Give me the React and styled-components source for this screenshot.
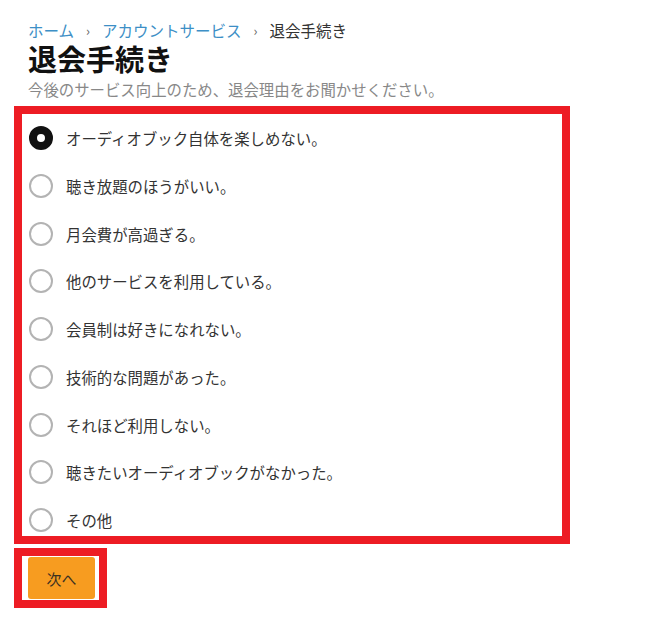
import React, { useState } from "react";
import styled, { createGlobalStyle } from "styled-components";

const Global = createGlobalStyle`
  html, body { margin: 0; padding: 0; background: #fff; }
  body { font-family: "Noto Sans CJK JP", "Noto Sans", sans-serif; color: #333; }
`;

const Page = styled.div`
  padding: 19px 0 0 14px;
  width: 556px;
`;

const Header = styled.div`
  padding-left: 14px;
`;

const Breadcrumb = styled.nav`
  display: flex;
  align-items: center;
  gap: 12px;
  font-size: 15.5px;
  line-height: 22px;
  height: 22px;
`;

const Crumb = styled.span`
  color: ${(p) => (p.$current ? "#333" : "#3d8fc6")};
`;

const Sep = styled.span`
  color: #666;
  font-size: 13px;
  transform: translateY(1px);
`;

const Title = styled.h1`
  margin: 0;
  font-size: 29px;
  line-height: 34px;
  font-weight: 700;
  color: #111;
`;

const Sub = styled.p`
  margin: 2px 0 0;
  font-size: 15.4px;
  line-height: 24px;
  color: #888;
`;

const Frame = styled.div`
  border: 8px solid #ed1c24;
  margin-top: 5px;
  padding: 12px 7px 4px;
  display: flex;
  flex-direction: column;
  gap: 23.75px;
  box-sizing: content-box;
  height: 406px;
`;

const Row = styled.label`
  display: flex;
  align-items: center;
  gap: 13px;
  height: 24px;
  cursor: pointer;
  font-size: 15.4px;
  color: #333;
`;

const Circle = styled.span`
  box-sizing: border-box;
  width: 24px;
  height: 24px;
  border-radius: 50%;
  flex: none;
  border: ${(p) => (p.$on ? "8px solid #111" : "2.5px solid #b3b3b3")};
  background: #fff;
`;

const ButtonFrame = styled.div`
  margin-top: 4px;
  width: 67px;
  border: 8px solid #ed1c24;
  padding: 1px 4px 1px 6px;
  box-sizing: content-box;
  height: 42px;
`;

const NextButton = styled.button`
  width: 67px;
  height: 42px;
  border: none;
  border-radius: 3px;
  background: #f79c20;
  color: #3a3020;
  font-family: "Noto Sans CJK JP", sans-serif;
  font-size: 15px;
  padding: 0;
  cursor: pointer;
`;

const reasons = [
  "オーディオブック自体を楽しめない。",
  "聴き放題のほうがいい。",
  "月会費が高過ぎる。",
  "他のサービスを利用している。",
  "会員制は好きになれない。",
  "技術的な問題があった。",
  "それほど利用しない。",
  "聴きたいオーディオブックがなかった。",
  "その他",
];

export default function App() {
  const [sel, setSel] = useState(0);
  return (
    <>
      <Global />
      <Page>
        <Header>
          <Breadcrumb>
            <Crumb>ホーム</Crumb>
            <Sep>›</Sep>
            <Crumb>アカウントサービス</Crumb>
            <Sep>›</Sep>
            <Crumb $current>退会手続き</Crumb>
          </Breadcrumb>
          <Title>退会手続き</Title>
          <Sub>今後のサービス向上のため、退会理由をお聞かせください。</Sub>
        </Header>
        <Frame>
          {reasons.map((r, i) => (
            <Row key={r} onClick={() => setSel(i)}>
              <Circle $on={sel === i} />
              {r}
            </Row>
          ))}
        </Frame>
        <ButtonFrame>
          <NextButton>次へ</NextButton>
        </ButtonFrame>
      </Page>
    </>
  );
}
